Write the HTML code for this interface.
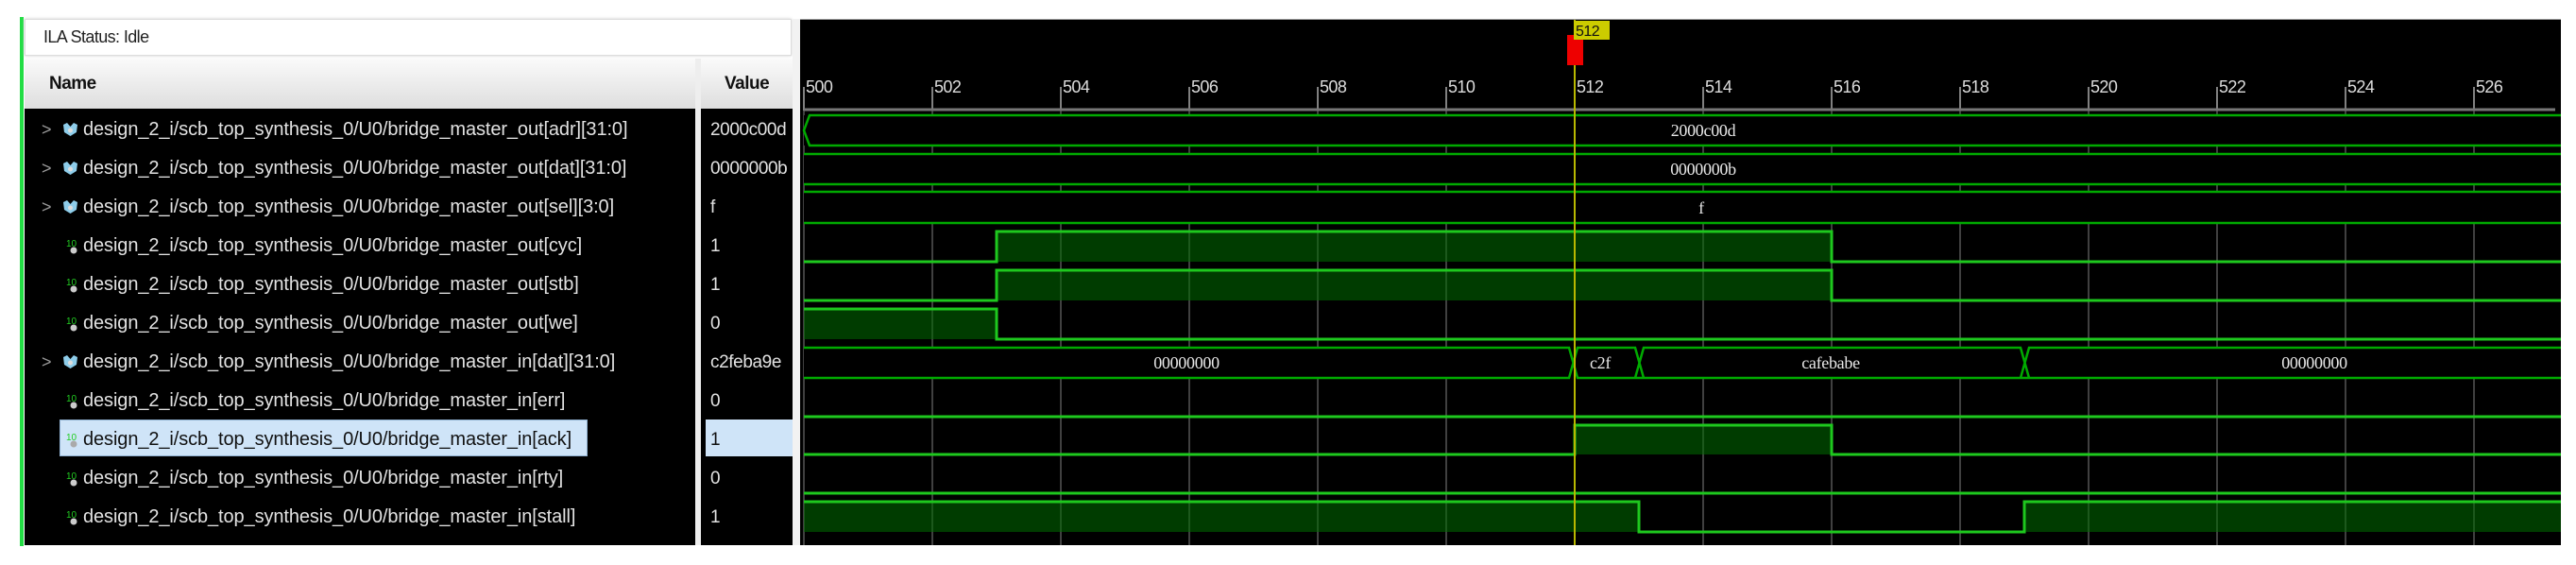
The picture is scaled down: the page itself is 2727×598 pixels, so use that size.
<!DOCTYPE html>
<html><head><meta charset="utf-8"><style>
*{margin:0;padding:0;box-sizing:border-box}
body{width:2727px;height:598px;background:#fff;position:relative;overflow:hidden;font-family:"Liberation Sans",sans-serif}
.abs{position:absolute}
.row{position:absolute;left:26px;width:710px;height:41px;color:#e2e2e2;font-size:20px;line-height:41px;white-space:nowrap;letter-spacing:-0.1px}
.row .chev{position:absolute;left:18px;color:#999;font-size:18px}
.row .t{position:absolute;left:62px}
.val{position:absolute;left:742px;width:97px;height:41px;line-height:41px;color:#e2e2e2;font-size:19px;padding-left:10px;letter-spacing:-0.4px;overflow:hidden;white-space:nowrap}
</style></head><body>
<div class="abs" style="left:21px;top:18px;width:4px;height:560px;background:#22dd44"></div>
<div class="abs" style="left:26px;top:20px;width:812px;height:39px;background:#fff;border:1px solid #ddd;box-shadow:0 0 3px #ccc"></div>
<div class="abs" style="left:46px;top:29px;font-size:18px;color:#222;letter-spacing:-0.6px">ILA Status: Idle</div>
<div class="abs" style="left:26px;top:62px;width:710px;height:53px;background:linear-gradient(#fafafa,#dedede)"></div>
<div class="abs" style="left:742px;top:62px;width:97px;height:53px;background:linear-gradient(#fafafa,#dedede)"></div>
<div class="abs" style="left:52px;top:78px;font-size:19px;font-weight:bold;color:#111;letter-spacing:-0.5px">Name</div>
<div class="abs" style="left:767px;top:78px;font-size:19px;font-weight:bold;color:#111;letter-spacing:-0.5px">Value</div>
<div class="abs" style="left:26px;top:115px;width:710px;height:462px;background:#000"></div>
<div class="abs" style="left:742px;top:115px;width:97px;height:462px;background:#000"></div>
<div class="abs" style="left:736px;top:62px;width:6px;height:515px;background:#eee"></div>
<div class="abs" style="left:839px;top:20px;width:8px;height:557px;background:#f2f2f2"></div>
<div class="abs" style="left:63px;top:444px;width:559px;height:39px;background:#cfe4f8;border:1px solid #8fb0d0"></div>
<div class="abs" style="left:747px;top:444px;width:92px;height:39px;background:#cfe4f8"></div>

<div class="row" style="top:117px"><span class="chev">&gt;</span><svg class="abs" style="left:40px;top:13px" width="17" height="15"><path d="M1 2 L5 0 L8.5 4 L12 0 L16 2 L15 10 L8.5 14 L2 10Z" fill="#8ecdea"/><circle cx="8.5" cy="8" r="2.5" fill="#ddd"/></svg><span class="t">design_2_i/scb_top_synthesis_0/U0/bridge_master_out[adr][31:0]</span></div>
<div class="row" style="top:158px"><span class="chev">&gt;</span><svg class="abs" style="left:40px;top:13px" width="17" height="15"><path d="M1 2 L5 0 L8.5 4 L12 0 L16 2 L15 10 L8.5 14 L2 10Z" fill="#8ecdea"/><circle cx="8.5" cy="8" r="2.5" fill="#ddd"/></svg><span class="t">design_2_i/scb_top_synthesis_0/U0/bridge_master_out[dat][31:0]</span></div>
<div class="row" style="top:199px"><span class="chev">&gt;</span><svg class="abs" style="left:40px;top:13px" width="17" height="15"><path d="M1 2 L5 0 L8.5 4 L12 0 L16 2 L15 10 L8.5 14 L2 10Z" fill="#8ecdea"/><circle cx="8.5" cy="8" r="2.5" fill="#ddd"/></svg><span class="t">design_2_i/scb_top_synthesis_0/U0/bridge_master_out[sel][3:0]</span></div>
<div class="row" style="top:240px"><svg class="abs" style="left:44px;top:11px" width="14" height="19"><text x="0" y="10" font-size="10" fill="#2c2" font-family="Liberation Sans">10</text><circle cx="8" cy="14" r="3.5" fill="#ccc"/></svg><span class="t">design_2_i/scb_top_synthesis_0/U0/bridge_master_out[cyc]</span></div>
<div class="row" style="top:281px"><svg class="abs" style="left:44px;top:11px" width="14" height="19"><text x="0" y="10" font-size="10" fill="#2c2" font-family="Liberation Sans">10</text><circle cx="8" cy="14" r="3.5" fill="#ccc"/></svg><span class="t">design_2_i/scb_top_synthesis_0/U0/bridge_master_out[stb]</span></div>
<div class="row" style="top:322px"><svg class="abs" style="left:44px;top:11px" width="14" height="19"><text x="0" y="10" font-size="10" fill="#2c2" font-family="Liberation Sans">10</text><circle cx="8" cy="14" r="3.5" fill="#ccc"/></svg><span class="t">design_2_i/scb_top_synthesis_0/U0/bridge_master_out[we]</span></div>
<div class="row" style="top:363px"><span class="chev">&gt;</span><svg class="abs" style="left:40px;top:13px" width="17" height="15"><path d="M1 2 L5 0 L8.5 4 L12 0 L16 2 L15 10 L8.5 14 L2 10Z" fill="#8ecdea"/><circle cx="8.5" cy="8" r="2.5" fill="#ddd"/></svg><span class="t">design_2_i/scb_top_synthesis_0/U0/bridge_master_in[dat][31:0]</span></div>
<div class="row" style="top:404px"><svg class="abs" style="left:44px;top:11px" width="14" height="19"><text x="0" y="10" font-size="10" fill="#2c2" font-family="Liberation Sans">10</text><circle cx="8" cy="14" r="3.5" fill="#ccc"/></svg><span class="t">design_2_i/scb_top_synthesis_0/U0/bridge_master_in[err]</span></div>
<div class="row" style="top:445px;color:#111"><svg class="abs" style="left:44px;top:11px" width="14" height="19"><text x="0" y="10" font-size="10" fill="#2c2" font-family="Liberation Sans">10</text><circle cx="8" cy="14" r="3.5" fill="#aaa"/></svg><span class="t">design_2_i/scb_top_synthesis_0/U0/bridge_master_in[ack]</span></div>
<div class="row" style="top:486px"><svg class="abs" style="left:44px;top:11px" width="14" height="19"><text x="0" y="10" font-size="10" fill="#2c2" font-family="Liberation Sans">10</text><circle cx="8" cy="14" r="3.5" fill="#ccc"/></svg><span class="t">design_2_i/scb_top_synthesis_0/U0/bridge_master_in[rty]</span></div>
<div class="row" style="top:527px"><svg class="abs" style="left:44px;top:11px" width="14" height="19"><text x="0" y="10" font-size="10" fill="#2c2" font-family="Liberation Sans">10</text><circle cx="8" cy="14" r="3.5" fill="#ccc"/></svg><span class="t">design_2_i/scb_top_synthesis_0/U0/bridge_master_in[stall]</span></div>

<div class="val" style="top:117px">2000c00d</div>
<div class="val" style="top:158px">0000000b</div>
<div class="val" style="top:199px">f</div>
<div class="val" style="top:240px">1</div>
<div class="val" style="top:281px">1</div>
<div class="val" style="top:322px">0</div>
<div class="val" style="top:363px">c2feba9e</div>
<div class="val" style="top:404px">0</div>
<div class="val" style="top:445px;color:#111">1</div>
<div class="val" style="top:486px">0</div>
<div class="val" style="top:527px">1</div>

<svg class="abs" style="left:0;top:0" width="2727" height="598">
<rect x="847" y="20" width="1864" height="557" fill="#000"/>
<line x1="847" y1="20.5" x2="2711" y2="20.5" stroke="#999"/>
<g stroke="#555" stroke-width="1.5">
<path d="M851 117V577M987 117V577M1123 117V577M1259 117V577M1395 117V577M1531 117V577M1667 117V577M1803 117V577M1939 117V577M2075 117V577M2211 117V577M2347 117V577M2483 117V577M2619 117V577"/>
</g>
<g stroke="#aaa" stroke-width="1.5">
<path d="M851 92V117M987 92V117M1123 92V117M1259 92V117M1395 92V117M1531 92V117M1667 92V117M1803 92V117M1939 92V117M2075 92V117M2211 92V117M2347 92V117M2483 92V117M2619 92V117"/>
</g>
<line x1="851" y1="116" x2="2705" y2="116" stroke="#777" stroke-width="3"/>
<g fill="#ddd" font-family="Liberation Sans" font-size="18" letter-spacing="-0.6">
<text x="853" y="98">500</text><text x="989" y="98">502</text><text x="1125" y="98">504</text><text x="1261" y="98">506</text><text x="1397" y="98">508</text><text x="1533" y="98">510</text><text x="1669" y="98">512</text><text x="1805" y="98">514</text><text x="1941" y="98">516</text><text x="2077" y="98">518</text><text x="2213" y="98">520</text><text x="2349" y="98">522</text><text x="2485" y="98">524</text><text x="2621" y="98">526</text>
</g>
<!-- bus interiors hide grid -->
<g fill="#000">
<rect x="851" y="122" width="1860" height="32"/>
<rect x="851" y="163" width="1860" height="32"/>
<rect x="851" y="203" width="1860" height="33"/>
<rect x="851" y="368" width="1860" height="32"/>
</g>
<g stroke="#0a0" stroke-width="2.5" fill="none">
<path d="M2711 122H857L851 138L857 154H2711"/>
<path d="M851 163H2711M851 195H2711"/>
<path d="M851 203H2711M851 236H2711"/>
<path d="M851 368H1661L1670 400H2711M851 400H1661L1670 368H1731L1740 400H2139L2148 368H2711M1670 400H1731L1740 368H2139L2148 400"/>
</g>
<g fill="#e8e8e8" font-family="Liberation Serif" font-size="18" text-anchor="middle" letter-spacing="-0.3">
<text x="1803" y="144">2000c00d</text>
<text x="1803" y="185">0000000b</text>
<text x="1801" y="226">f</text>
<text x="1256" y="390">00000000</text>
<text x="1694" y="390">c2f</text>
<text x="1938" y="390">cafebabe</text>
<text x="2450" y="390">00000000</text>
</g>
<g fill="rgba(0,110,0,0.55)">
<rect x="1055" y="245" width="884" height="32"/>
<rect x="1055" y="286" width="884" height="32"/>
<rect x="851" y="327" width="204" height="32"/>
<rect x="1667" y="450" width="272" height="31"/>
<rect x="851" y="531" width="884" height="32"/>
<rect x="2143" y="531" width="568" height="32"/>
</g>
<g stroke="#1ec81e" stroke-width="3" fill="none">
<path d="M851 277H1055V245H1939V277H2711"/>
<path d="M851 318H1055V286H1939V318H2711"/>
<path d="M851 327H1055V359H2711"/>
<path d="M851 441H2711"/>
<path d="M851 481H1667V450H1939V481H2711"/>
<path d="M851 522H2711"/>
<path d="M851 531H1735V563H2143V531H2711"/>
</g>
<line x1="1667" y1="21" x2="1667" y2="577" stroke="#b8b800" stroke-width="2"/>
<rect x="1659" y="37" width="17" height="32" fill="#e00"/>
<rect x="1666" y="22" width="38" height="20" fill="#cccc00"/>
<text x="1668" y="38" font-family="Liberation Sans" font-size="16" fill="#111" letter-spacing="-0.5">512</text>
</svg>
</body></html>
